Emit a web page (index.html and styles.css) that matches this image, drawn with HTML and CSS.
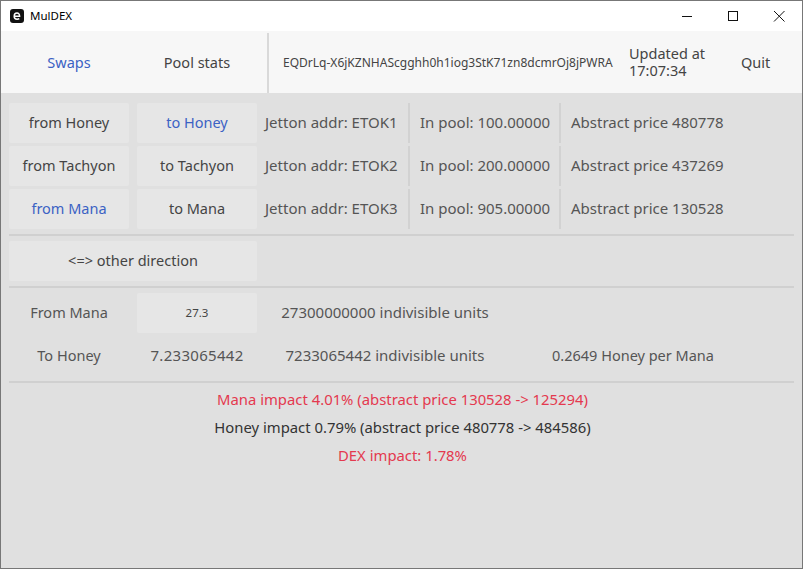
FILE: index.html
```html
<!DOCTYPE html>
<html lang="en">
<head>
<meta charset="utf-8">
<title>MulDEX</title>
<link rel="stylesheet" href="styles.css">
</head>
<body>
<div class="window">
  <header class="titlebar">
    <div class="app-title">
      <svg class="app-icon" width="14" height="14" viewBox="0 0 14 14"><rect width="14" height="14" rx="3" fill="#111"/><path d="M4.2 7.2h5.4c0-2-1-3.2-2.6-3.2S4.2 5.3 4.2 7.2s1.100 3 2.900 3c.9 0 1.600-.2 2.200-.6" fill="none" stroke="#fff" stroke-width="1.500"/></svg>
      <span class="app-name">MulDEX</span>
    </div>
    <div class="win-controls">
      <svg width="46" height="31" viewBox="0 0 46 31"><path d="M18 15.500h10" stroke="#111" fill="none"/></svg>
      <svg width="46" height="31" viewBox="0 0 46 31"><rect x="18.500" y="10.500" width="9" height="9" stroke="#111" fill="none"/></svg>
      <svg width="46" height="31" viewBox="0 0 46 31"><path d="M18 10l10.500 10.500M28.500 10L18 20.500" stroke="#111" fill="none"/></svg>
    </div>
  </header>
  <nav class="toolbar">
    <div class="tab tab-active">Swaps</div>
    <div class="tab">Pool stats</div>
    <div class="vsep"></div>
    <div class="address">EQDrLq-X6jKZNHAScgghh0h1iog3StK71zn8dcmrOj8jPWRA</div>
    <div class="updated">Updated at<br>17:07:34</div>
    <div class="quit">Quit</div>
  </nav>
  <main class="content">
    <section class="tokens">
      <div class="btn">from Honey</div><div class="btn blue">to Honey</div>
      <div class="cell addr">Jetton addr: ETOK1</div><div class="cell ruled">In pool: 100.00000</div><div class="cell ruled">Abstract price 480778</div>
      <div class="btn">from Tachyon</div><div class="btn">to Tachyon</div>
      <div class="cell addr">Jetton addr: ETOK2</div><div class="cell ruled">In pool: 200.00000</div><div class="cell ruled">Abstract price 437269</div>
      <div class="btn blue">from Mana</div><div class="btn">to Mana</div>
      <div class="cell addr">Jetton addr: ETOK3</div><div class="cell ruled">In pool: 905.00000</div><div class="cell ruled">Abstract price 130528</div>
    </section>
    <hr class="hsep">
    <div class="btn wide">&lt;=&gt; other direction</div>
    <hr class="hsep">
    <section class="swap">
      <div class="label">From Mana</div>
      <div class="btn input">27.3</div>
      <div class="label units">27300000000 indivisible units</div>
      <div></div>
      <div class="label">To Honey</div>
      <div class="label amount">7.233065442</div>
      <div class="label units">7233065442 indivisible units</div>
      <div class="label">0.2649 Honey per Mana</div>
    </section>
    <hr class="hsep hsep-last">
    <section class="impacts">
      <div class="impact red">Mana impact 4.01% (abstract price 130528 -&gt; 125294)</div>
      <div class="impact dark">Honey impact 0.79% (abstract price 480778 -&gt; 484586)</div>
      <div class="impact red">DEX impact: 1.78%</div>
    </section>
  </main>
</div>
</body>
</html>
```
FILE: styles.css
```css
* { box-sizing: border-box; }
html, body { margin: 0; padding: 0; height: 100%; }
body { font-family: "Noto Sans", "Open Sans", sans-serif; font-size: 14.5px; color: #555; background: #e0e0e0; }
.window { height: 569px; display: flex; flex-direction: column; border: 1px solid #777; overflow: hidden; }
.titlebar { height: 30px; flex: none; background: #fff; display: flex; justify-content: space-between; }
.app-title { display: flex; align-items: center; gap: 6px; padding-left: 9px; font-size: 11.500px; color: #000; }
.app-icon { display: block; }
.app-name { padding-bottom: 2px; }
.win-controls { display: flex; }
.win-controls svg { display: block; }
.toolbar { height: 62px; flex: none; background: #f7f7f7; display: flex; align-items: center; padding-left: 4px; color: #444; }
.tab { width: 128px; text-align: center; }
.tab-active { color: #3c62c4; }
.vsep { width: 2px; height: 60px; background: #d9d9d9; margin: 2px 0 0 6px; }
.address { width: 360px; padding-left: 14px; font-size: 12.030px; white-space: nowrap; }
.updated { width: 112px; line-height: 17px; }
.quit { width: 60px; }
.content { flex: 1; padding: 10px 8px 0; }
.tokens { display: grid; grid-template-columns: 128px 128px 143px 151px 1fr; row-gap: 3px; grid-auto-rows: 40px; }
.btn { width: 120px; background: #e6e6e6; border-radius: 2px; display: flex; align-items: center; justify-content: center; padding-bottom: 2px; color: #444; white-space: nowrap; }
.blue { color: #3c62c4; }
.cell { display: flex; align-items: center; padding-bottom: 2px; font-size: 15px; white-space: nowrap; }
.ruled { border-left: 2px solid #d2d2d2; padding-left: 10px; }
.hsep { height: 2px; border: 0; margin: 5px 0; background: #d0d0d0; }
.hsep-last { margin-bottom: 0; }
.wide { width: 248px; height: 40px; }
.swap { display: grid; grid-template-columns: 128px 128px 240px 256px; row-gap: 3px; grid-auto-rows: 40px; }
.label { width: 100%; display: flex; align-items: center; justify-content: center; padding-bottom: 2px; white-space: nowrap; }
.swap > .label:nth-child(5), .swap > .label:nth-child(1) { width: 120px; }
.amount { width: 120px; font-size: 15px; letter-spacing: .3px; }
.units { font-size: 15px; }
.input { font-size: 11.500px; }
.impacts { display: flex; flex-direction: column; align-items: center; padding: 2px 0 0 2px; font-size: 14.850px; }
.impact { height: 28px; display: flex; align-items: center; }
.red { color: #e4394f; }
.dark { color: #333; }
```
